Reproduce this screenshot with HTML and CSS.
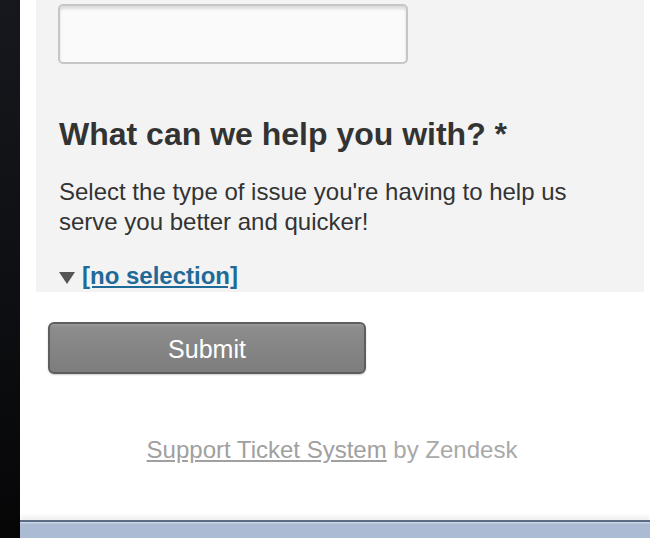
FILE: index.html
```html
<!DOCTYPE html>
<html>
<head>
<meta charset="utf-8">
<link rel="stylesheet" href="styles.css">
</head>
<body>
<div class="frame">
  <div class="side"></div>
  <div class="main">
    <div class="content">
      <div class="panel">
        <div class="field"><input class="text-input" type="text"></div>
        <h2 class="question">What can we help you with? *</h2>
        <p class="hint">Select the type of issue you're having to help us serve you better and quicker!</p>
        <div class="select"><span class="tri"></span><a class="sel-link" href="#">[no selection]</a></div>
      </div>
      <div class="actions"><button class="submit" type="button">Submit</button></div>
      <div class="footer"><a class="foot-link" href="#">Support Ticket System</a> by Zendesk</div>
    </div>
    <div class="bottom-bar"></div>
  </div>
</div>
</body>
</html>
```
FILE: styles.css
```css
html, body { margin: 0; padding: 0; }
body {
  width: 650px;
  height: 538px;
  overflow: hidden;
  font-family: "Liberation Sans", Arial, sans-serif;
  background: #fff;
}
.frame { display: flex; height: 538px; }
.side {
  width: 20px;
  flex: none;
  background: linear-gradient(to bottom, #16181d 0%, #0d0e11 60%, #060607 100%);
}
.main { flex: 1; display: flex; flex-direction: column; background: #fff; }
.content { flex: 1; padding-left: 16px; }
.panel {
  width: 608px;
  background: #f3f3f3;
  padding: 4px 0 0 22px;
  box-sizing: border-box;
  height: 292px;
}
.field { height: 60px; }
.text-input {
  display: block;
  width: 350px;
  height: 60px;
  box-sizing: border-box;
  border: 2px solid #c6c6c6;
  border-radius: 5px;
  background: #fafafa;
  box-shadow: inset 0 3px 3px rgba(0,0,0,0.12);
  margin: 0;
  padding: 0;
}
.question {
  margin: 51px 0 0 1px;
  font-size: 32px;
  line-height: 38px;
  font-weight: bold;
  color: #333;
}
.hint {
  margin: 24px 0 0 1px;
  font-size: 24px;
  line-height: 30px;
  color: #333;
  width: 540px;
}
.select {
  margin-top: 25px;
  display: flex;
  align-items: center;
  gap: 7px;
  padding-left: 1px;
}
.tri {
  width: 0; height: 0;
  border-left: 8px solid transparent;
  border-right: 8px solid transparent;
  border-top: 12px solid #555;
  margin-top: 3px;
}
.sel-link {
  font-size: 24px;
  font-weight: bold;
  color: #1f6a97;
  text-decoration: underline;
  line-height: 28px;
}
.actions { padding: 30px 0 0 12px; }
.submit {
  display: block;
  width: 318px;
  height: 52px;
  border: 2px solid #5e5e5e;
  border-radius: 6px;
  background: linear-gradient(to bottom, #9a9a9a 0%, #8c8c8c 8%, #7d7d7d 100%);
  color: #fff;
  font-family: "Liberation Sans", Arial, sans-serif;
  font-size: 25px;
  padding: 3px 0 0 0;
  box-shadow: 0 1px 2px rgba(0,0,0,0.2);
}
.footer {
  margin-top: 62px;
  text-align: center;
  padding-right: 22px;
  font-size: 24px;
  color: #a9a9a9;
}
.foot-link { color: #a0a0a0; text-decoration: underline; }
.bottom-bar {
  height: 16px;
  flex: none;
  border-top: 2px solid #5b6b83;
  background: linear-gradient(to bottom, #c9d3e2 0px, #c9d3e2 1px, #aabbd3 2px, #aabbd3 100%);
  box-shadow: 0 -4px 4px rgba(0,0,0,0.06);
}
```
